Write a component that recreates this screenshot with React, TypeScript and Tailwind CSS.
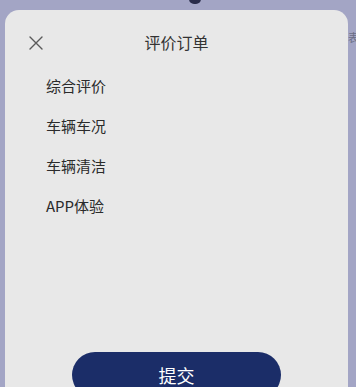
export default function App() {
  const items = ["综合评价", "车辆车况", "车辆清洁", "APP体验"];
  return (
    <div
      className="relative w-[356px] h-[387px] overflow-hidden bg-[#a3a5c5]"
      style={{ fontFamily: '"Noto Sans CJK SC", "Noto Sans", sans-serif' }}
    >
      {/* map pin tip peeking from behind */}
      <div className="absolute left-[189px] -top-[6px] w-[12px] h-[10px] rounded-full bg-[#2a2d4a]" />
      {/* cut-off label on the right */}
      <div className="absolute left-[348px] top-[32px] text-[11px] leading-none text-[#6b6e86]">表</div>

      <div className="absolute left-[5px] top-[10px] w-[343px] h-[400px] rounded-[14px] bg-[#e8e8e8] flex flex-col">
        <div className="relative h-[64px] flex items-center justify-center">
          <button className="absolute left-[22px] top-[25px] w-[18px] h-[16px] flex items-center justify-center text-[#555]">
            <svg width="14" height="14" viewBox="0 0 14 14" fill="none" stroke="#5a5a5a" strokeWidth="1.4" strokeLinecap="round">
              <path d="M1 1 L13 13 M13 1 L1 13" />
            </svg>
          </button>
          <span className="text-[16px] text-[#333] mb-[1px]">评价订单</span>
        </div>

        <div className="flex flex-col pl-[41px] -mt-[8px]">
          {items.map((t) => (
            <div key={t} className="h-[40px] flex items-center text-[15px] text-[#2b2b2b]">
              {t}
            </div>
          ))}
        </div>

        <div className="flex justify-center mt-[126px]">
          <button className="w-[209px] h-[46px] rounded-full bg-[#1b2d68] text-white text-[18px] flex items-center justify-center">
            提交
          </button>
        </div>
      </div>
    </div>
  );
}
